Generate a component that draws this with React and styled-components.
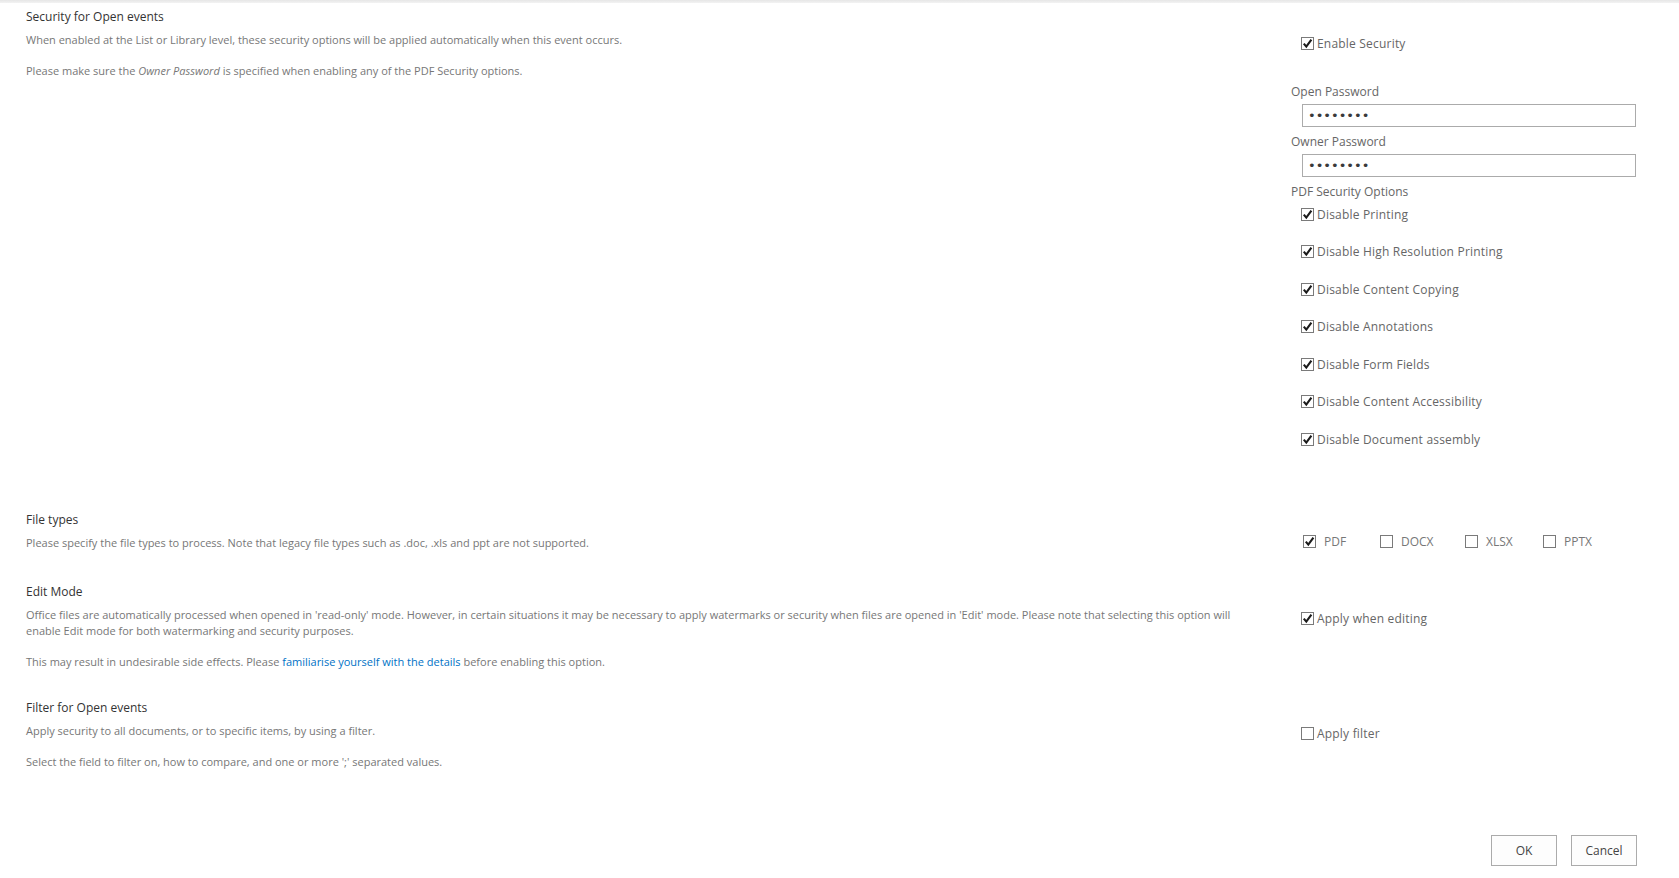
import React from 'react'
import styled, { createGlobalStyle } from 'styled-components'

const GlobalStyle = createGlobalStyle`
  html, body {
    margin: 0;
    padding: 0;
    background: #fff;
  }
  body {
    font-family: "Open Sans", "Liberation Sans", sans-serif;
    color: #444;
  }
`

const TopStrip = styled.div`
  height: 3px;
  background: linear-gradient(#e6e6e6, #f3f3f3);
`

const Page = styled.div`
  padding: 5px 42px 0 26px;
`

const Section = styled.div`
  display: grid;
  grid-template-columns: 1265px 346px;
  padding-bottom: ${props => props.after}px;
`

const Left = styled.div`
  display: flex;
  flex-direction: column;
`

const Title = styled.div`
  font-size: 12px;
  line-height: 18px;
  color: #333;
`

const Desc = styled.p`
  margin: 15px 0 0;
  max-width: 1240px;
  font-size: 11px;
  line-height: 16px;
  color: #777;
  &:first-of-type {
    margin-top: 6px;
  }
  em {
    font-style: italic;
  }
`

const Link = styled.a`
  color: #0072c6;
  text-decoration: none;
`

const Right = styled.div`
  display: flex;
  flex-direction: column;
  padding-top: ${props => props.top}px;
`

const Row = styled.label`
  display: flex;
  align-items: center;
  height: 18px;
  margin-left: 10px;
  font-size: 12px;
  letter-spacing: 0.2px;
  color: #666;
  gap: 3px;
`

const FieldLabel = styled.div`
  height: 18px;
  line-height: 18px;
  font-size: 12px;
  color: #666;
  margin-top: ${props => props.gap}px;
`

const Password = styled.input`
  box-sizing: border-box;
  width: 334px;
  height: 23px;
  margin: 3px 0 0 11px;
  padding: 0 0 0 5px;
  border: 1px solid #ababab;
  font-family: "DejaVu Sans", sans-serif;
  font-size: 13px;
  color: #3a3a3a;
  outline: none;
`

const Options = styled.div`
  display: flex;
  flex-direction: column;
  gap: 19.6px;
  margin-top: 4px;
`

const TypeList = styled.div`
  display: grid;
  grid-template-columns: 77px 85px 78px auto;
  align-items: center;
  margin-left: 12px;
  height: 18px;
`

const TypeItem = styled.label`
  display: flex;
  align-items: center;
  gap: 8px;
  font-size: 12px;
  color: #777;
`

const Buttons = styled.div`
  display: flex;
  justify-content: flex-end;
  gap: 14px;
`

const Button = styled.button`
  box-sizing: border-box;
  width: 66px;
  height: 31px;
  border: 1px solid #ababab;
  background: #fdfdfd;
  font-family: "Open Sans", sans-serif;
  font-size: 12px;
  color: #444;
  padding: 0;
`

function Check({ on }) {
  return (
    <svg width="13" height="13" viewBox="0 0 13 13" style={{ flex: '0 0 auto' }}>
      <rect x="0.5" y="0.5" width="12" height="12" fill="#fff" stroke="#7a7a7a" />
      {on && <path d="M2.8 6.6 L5.3 9.6 L10.4 2.6" fill="none" stroke="#1b1b1b" strokeWidth="2.1" />}
    </svg>
  )
}

const pdfOptions = [
  'Disable Printing',
  'Disable High Resolution Printing',
  'Disable Content Copying',
  'Disable Annotations',
  'Disable Form Fields',
  'Disable Content Accessibility',
  'Disable Document assembly'
]

const fileTypes = [
  { name: 'PDF', on: true },
  { name: 'DOCX', on: false },
  { name: 'XLSX', on: false },
  { name: 'PPTX', on: false }
]

export default function App() {
  return <>
    <GlobalStyle/>
    <TopStrip/>
    <Page>
      <Section after={62}>
        <Left>
          <Title>Security for Open events</Title>
          <Desc>When enabled at the List or Library level, these security options will be applied automatically when this event occurs.</Desc>
          <Desc>Please make sure the <em>Owner Password</em> is specified when enabling any of the PDF Security options.</Desc>
        </Left>
        <Right top={26}>
          <Row><Check on/>Enable Security</Row>
          <FieldLabel gap={31}>Open Password</FieldLabel>
          <Password type="password" value="password" readOnly/>
          <FieldLabel gap={6}>Owner Password</FieldLabel>
          <Password type="password" value="password" readOnly/>
          <FieldLabel gap={6}>PDF Security Options</FieldLabel>
          <Options>
            {pdfOptions.map(o => <Row key={o}><Check on/>{o}</Row>)}
          </Options>
        </Right>
      </Section>

      <Section after={32}>
        <Left>
          <Title>File types</Title>
          <Desc>Please specify the file types to process. Note that legacy file types such as .doc, .xls and ppt are not supported.</Desc>
        </Left>
        <Right top={22}>
          <TypeList>
            {fileTypes.map(t => <TypeItem key={t.name}><Check on={t.on}/>{t.name}</TypeItem>)}
          </TypeList>
        </Right>
      </Section>

      <Section after={29}>
        <Left>
          <Title>Edit Mode</Title>
          <Desc>Office files are automatically processed when opened in 'read-only' mode. However, in certain situations it may be necessary to apply watermarks or security when files are opened in 'Edit' mode. Please note that selecting this option will enable Edit mode for both watermarking and security purposes.</Desc>
          <Desc>This may result in undesirable side effects. Please <Link href="#">familiarise yourself with the details</Link> before enabling this option.</Desc>
        </Left>
        <Right top={27}>
          <Row><Check on/>Apply when editing</Row>
        </Right>
      </Section>

      <Section after={65}>
        <Left>
          <Title>Filter for Open events</Title>
          <Desc>Apply security to all documents, or to specific items, by using a filter.</Desc>
          <Desc>Select the field to filter on, how to compare, and one or more ';' separated values.</Desc>
        </Left>
        <Right top={26}>
          <Row><Check/>Apply filter</Row>
        </Right>
      </Section>

      <Buttons>
        <Button>OK</Button>
        <Button>Cancel</Button>
      </Buttons>
    </Page>
  </>
}
